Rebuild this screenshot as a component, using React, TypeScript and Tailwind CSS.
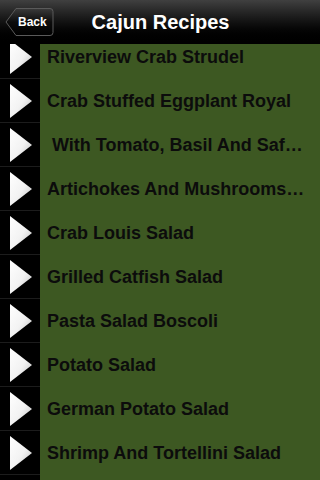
import React from 'react'

const recipes = [
  'Riverview Crab Strudel',
  'Crab Stuffed Eggplant Royal',
  '\u00a0With Tomato, Basil And Saf\u2026',
  'Artichokes And Mushrooms\u2026',
  'Crab Louis Salad',
  'Grilled Catfish Salad',
  'Pasta Salad Boscoli',
  'Potato Salad',
  'German Potato Salad',
  'Shrimp And Tortellini Salad',
  '',
]

function Arrow() {
  return (
    <svg width="24" height="36" viewBox="0 0 24 36">
      <defs>
        <linearGradient id="tri" x1="0" y1="0" x2="1" y2="1">
          <stop offset="0" stopColor="#ffffff" />
          <stop offset="0.55" stopColor="#f2f2f2" />
          <stop offset="1" stopColor="#bdbdbd" />
        </linearGradient>
      </defs>
      <polygon points="1,1 23,18 1,35" fill="url(#tri)" />
    </svg>
  )
}

function Row({ title, first }: { title: string; first?: boolean }) {
  return (
    <div className={`flex items-end overflow-hidden ${first ? 'h-[35px]' : 'h-[44px]'}`}>
      <div className="flex h-[44px] w-full shrink-0">
        <div className="flex w-[40px] shrink-0 items-center border-b border-[#1c1c1c] bg-black pl-[9px]">
          <Arrow />
        </div>
        <div className="flex min-w-0 flex-1 items-center bg-[#3d5822] pl-[7px] pr-[8px]">
          <span className="whitespace-nowrap text-[18px] font-bold text-[#0c0c0c]">{title}</span>
        </div>
      </div>
    </div>
  )
}

export default function App() {
  return (
    <div
      className="h-[480px] w-[320px] overflow-hidden bg-black"
      style={{ fontFamily: '"Liberation Sans", Arial, sans-serif' }}
    >
      <div className="relative flex h-[44px] items-center justify-center bg-gradient-to-b from-[#404040] via-[#121212] to-black">
        <div className="absolute left-[5px] top-[7px] flex h-[30px] items-center">
          <svg width="49" height="30" viewBox="0 0 49 30" className="absolute left-0 top-0">
            <defs>
              <linearGradient id="btn" x1="0" y1="0" x2="0" y2="1">
                <stop offset="0" stopColor="#3a3a3a" />
                <stop offset="0.5" stopColor="#0c0c0c" />
                <stop offset="1" stopColor="#000" />
              </linearGradient>
            </defs>
            <path d="M1 15 L11 1.5 H45 Q48 1.5 48 4.5 V25.5 Q48 28.5 45 28.5 H11 Z" fill="url(#btn)" stroke="#5a5a5a" strokeWidth="1" />
          </svg>
          <span className="relative pl-[13px] text-[12px] font-bold text-white">Back</span>
        </div>
        <span className="pl-[1px] text-[20px] font-bold text-white">Cajun Recipes</span>
      </div>
      <div className="flex flex-col">
        {recipes.map((r, i) => (
          <Row key={i} title={r} first={i === 0} />
        ))}
      </div>
    </div>
  )
}
